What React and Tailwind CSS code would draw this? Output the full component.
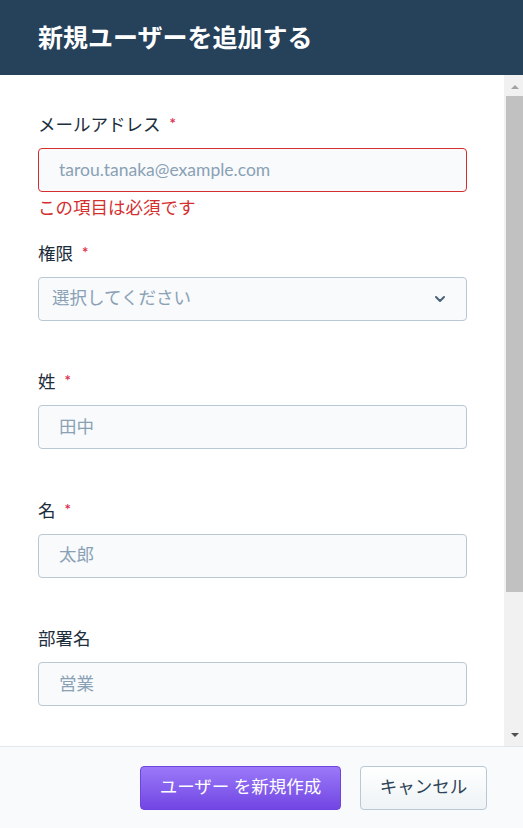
import { ChevronDown } from "lucide-react";

const fields = [
  { label: "メールアドレス", required: true, placeholder: "tarou.tanaka@example.com", error: "この項目は必須です" },
  { label: "権限", required: true, placeholder: "選択してください", select: true },
  { label: "姓", required: true, placeholder: "田中" },
  { label: "名", required: true, placeholder: "太郎" },
  { label: "部署名", required: false, placeholder: "営業" },
];

function Field({ label, required, placeholder, error, select }) {
  return (
    <div className="mb-[21.5px]">
      <label className="flex items-center h-6 text-[17.5px] leading-6 text-[#1c2d3c]">
        {label}
        {required && <span className="ml-[9px] text-[15px] font-bold text-[#e0304e] -mt-1">*</span>}
      </label>
      <div
        className={
          "mt-[11px] h-[44px] flex items-center rounded border bg-[#f8fafc] " +
          (error ? "border-[#d32f2f] pl-5" : select ? "border-[#b9c8d5] pl-[13px] pr-[18px]" : "border-[#b9c8d5] pl-5")
        }
      >
        <span className="flex-1 text-[17.5px] text-[#8aa1b5]">{placeholder}</span>
        {select && <ChevronDown className="w-[16px] h-[16px] text-[#4a6176]" strokeWidth={3} />}
      </div>
      <div className="mt-1 h-6 text-[17.5px] leading-6 text-[#d32f2f]">{error}</div>
    </div>
  );
}

function Scrollbar() {
  return (
    <div className="w-[19px] shrink-0 bg-[#f1f1f1] flex flex-col items-end">
      <div className="h-[17px] w-[17px] flex items-end justify-center pb-[3px]">
        <div className="w-0 h-0 border-l-[4px] border-r-[4px] border-b-[4px] border-l-transparent border-r-transparent border-b-[#a3a3a3]" />
      </div>
      <div className="mt-[4px] h-[496px] w-[17px] bg-[#c1c1c1]" />
      <div className="flex-1" />
      <div className="h-[17px] w-[17px] flex items-start justify-center pt-[4px]">
        <div className="w-0 h-0 border-l-[4px] border-r-[4px] border-t-[4px] border-l-transparent border-r-transparent border-t-[#505050]" />
      </div>
    </div>
  );
}

export default function App() {
  return (
    <div
      className="w-[523px] h-[828px] flex flex-col bg-white"
      style={{ fontFamily: 'Lato, "Noto Sans CJK JP", sans-serif' }}
    >
      <div className="h-[75px] shrink-0 bg-[#26415a] flex items-center px-[38px]">
        <h1 className="text-[25px] font-bold text-white">新規ユーザーを追加する</h1>
      </div>
      <div className="flex-1 flex min-h-0">
        <div className="flex-1 overflow-hidden">
          <div className="pl-[38px] pr-[37px] pt-[38px]">
            {fields.map((f) => (
              <Field key={f.label} {...f} />
            ))}
          </div>
        </div>
        <Scrollbar />
      </div>
      <div className="h-[82px] shrink-0 border-t border-[#dfe6ec] bg-[#f8fafc] flex items-center justify-end gap-[19px] pr-[36px]">
        <button className="h-[44px] w-[201px] rounded border border-[#6d44df] bg-gradient-to-b from-[#9b78f8] to-[#7245e3] text-white text-[17.5px]">
          ユーザー を新規作成
        </button>
        <button className="h-[44px] w-[127px] rounded border border-[#b9c8d5] bg-gradient-to-b from-white to-[#eef3f5] text-[#2f4457] text-[17.5px]">
          キャンセル
        </button>
      </div>
    </div>
  );
}
